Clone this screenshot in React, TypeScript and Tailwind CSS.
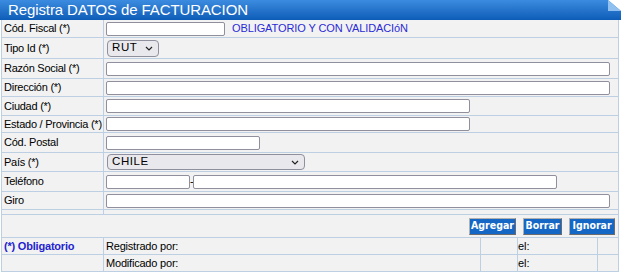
import React from "react";

const line = "border-[#bccfe3]";

function Row({ label, h, children }: { label: React.ReactNode; h: string; children?: React.ReactNode }) {
  return (
    <div className={`flex ${h} border-b ${line}`}>
      <div className={`w-[102px] shrink-0 border-r ${line} pl-[2px] flex items-center whitespace-nowrap tracking-[-0.25px]`}>{label}</div>
      <div className="flex-1 flex items-center pl-[2px]">{children}</div>
    </div>
  );
}

function Input({ w }: { w: string }) {
  return <input className={`${w} h-[14px] bg-white border border-[#8f8f9d] rounded-[2px] outline-none`} />;
}

function Select({ w, h, value }: { w: string; h: string; value: string }) {
  return (
    <div className={`${w} ${h} ml-px bg-[#e9e9ed] border border-[#8f8f9d] rounded-[4px] flex items-center justify-between pl-[4px] pr-[5px] text-[11.5px] text-black`}>
      <span className="tracking-[0.6px]">{value}</span>
      <svg width="8" height="5" viewBox="0 0 8 5">
        <path d="M1 1 L4 4 L7 1" fill="none" stroke="#222" strokeWidth="1.2" />
      </svg>
    </div>
  );
}

function Btn({ children, w }: { children: React.ReactNode; w: string }) {
  return (
    <div
      className={`${w} h-[17px] bg-[#1567c6] text-white font-bold text-[10.5px] font-['DejaVu_Sans_Condensed','DejaVu_Sans',sans-serif] flex items-center justify-center border border-t-[#b0b0b0] border-l-[#b0b0b0] border-b-[#6b6b6b] border-r-[#6b6b6b]`}
    >
      {children}
    </div>
  );
}

export default function App() {
  return (
    <div className="w-[621px] bg-white font-['Liberation_Sans',Arial,sans-serif] text-[11px] text-black">
      <div className="relative h-[20px] bg-gradient-to-b from-[#3b8ce0] to-[#0c5cb7] text-white pl-[8px] leading-[20px] text-[15px] font-['Liberation_Sans_Narrow','Liberation_Sans',sans-serif] tracking-[-0.1px]">
        Registra DATOS de FACTURACION
        <svg className="absolute right-0 top-0" width="13" height="11" viewBox="0 0 13 11">
          <polygon points="0,0 13,0 13,11" fill="#ffffff" />
          <polygon points="0,0 13,11 0,11" fill="#8fc0ef" />
        </svg>
      </div>
      <div className={`ml-px w-[618px] border-l border-r ${line} bg-[#f2f2f2]`}>
        <Row label="Cód. Fiscal (*)" h="h-[18px]">
          <Input w="w-[119px]" />
          <span className="ml-[7px] text-[#2a2ad6] text-[11px] tracking-[-0.1px]">OBLIGATORIO Y CON VALIDACIóN</span>
        </Row>
        <Row label="Tipo Id (*)" h="h-[21px]">
          <Select w="w-[52px]" h="h-[17px]" value="RUT" />
        </Row>
        <Row label="Razón Social (*)" h="h-[20px]">
          <Input w="w-[504px]" />
        </Row>
        <Row label="Dirección (*)" h="h-[18px]">
          <Input w="w-[504px]" />
        </Row>
        <Row label="Ciudad (*)" h="h-[19px]">
          <Input w="w-[364px]" />
        </Row>
        <Row label="Estado / Provincia (*)" h="h-[17px]">
          <Input w="w-[364px]" />
        </Row>
        <Row label="Cód. Postal" h="h-[20px]">
          <Input w="w-[154px]" />
        </Row>
        <Row label="País (*)" h="h-[19px]">
          <Select w="w-[198px]" h="h-[16px]" value="CHILE" />
        </Row>
        <Row label="Teléfono" h="h-[20px]">
          <Input w="w-[84px]" />
          <span className="w-[3px] text-center leading-none">-</span>
          <Input w="w-[364px]" />
        </Row>
        <Row label="Giro" h="h-[18px]">
          <Input w="w-[504px]" />
        </Row>
        <Row label="" h="h-[5px]" />
        <div className={`h-[23px] border-b ${line} flex items-center justify-end gap-[7px] pr-[3px]`}>
          <Btn w="w-[47px]">Agregar</Btn>
          <Btn w="w-[39px]">Borrar</Btn>
          <Btn w="w-[46px]">Ignorar</Btn>
        </div>
        <div className={`flex h-[17px] border-b ${line}`}>
          <div className={`w-[102px] shrink-0 border-r ${line} pl-[2px] flex items-center font-bold text-[#2323cf] tracking-[-0.2px]`}>(*) Obligatorio</div>
          <div className={`w-[377px] shrink-0 border-r ${line} pl-[2px] flex items-center tracking-[-0.2px]`}>Registrado por:</div>
          <div className={`w-[37px] shrink-0 border-r ${line}`} />
          <div className={`w-[80px] shrink-0 border-r ${line} flex items-center`}>el:</div>
          <div className="flex-1" />
        </div>
        <div className={`flex h-[17px] border-b ${line}`}>
          <div className={`w-[102px] shrink-0 border-r ${line}`} />
          <div className={`w-[377px] shrink-0 border-r ${line} pl-[2px] flex items-center tracking-[-0.2px]`}>Modificado por:</div>
          <div className={`w-[37px] shrink-0 border-r ${line}`} />
          <div className={`w-[80px] shrink-0 border-r ${line} flex items-center`}>el:</div>
          <div className="flex-1" />
        </div>
      </div>
    </div>
  );
}
